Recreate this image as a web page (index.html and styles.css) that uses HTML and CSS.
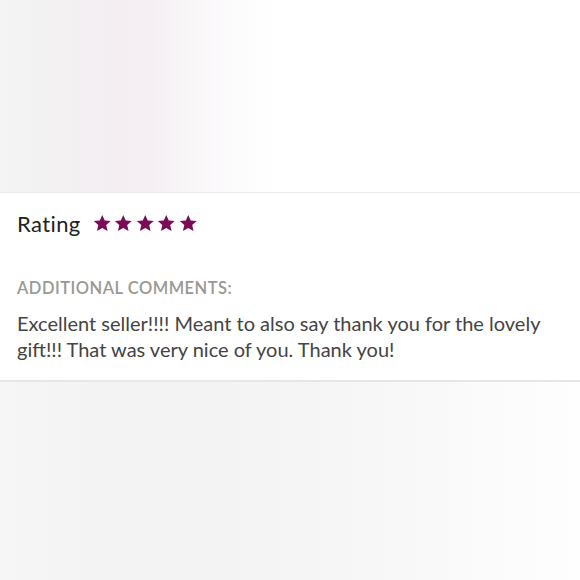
FILE: index.html
```html
<!DOCTYPE html>
<html>
<head>
<meta charset="utf-8">
<link rel="stylesheet" href="styles.css">
</head>
<body>
<div class="page">
  <div class="top-photo"></div>
  <section class="card">
    <div class="rating-row">
      <span class="rating-label">Rating</span>
      <span class="stars">
        <svg class="star" viewBox="0 0 24 24"><path d="M12 1.2l3.2 7.2 7.8.7-5.9 5.2 1.8 7.7L12 18.1l-6.9 3.9 1.8-7.7L1 9.1l7.8-.7z"/></svg>
        <svg class="star" viewBox="0 0 24 24"><path d="M12 1.2l3.2 7.2 7.8.7-5.9 5.2 1.8 7.7L12 18.1l-6.9 3.9 1.8-7.7L1 9.1l7.8-.7z"/></svg>
        <svg class="star" viewBox="0 0 24 24"><path d="M12 1.2l3.2 7.2 7.8.7-5.9 5.2 1.8 7.7L12 18.1l-6.9 3.9 1.8-7.7L1 9.1l7.8-.7z"/></svg>
        <svg class="star" viewBox="0 0 24 24"><path d="M12 1.2l3.2 7.2 7.8.7-5.9 5.2 1.8 7.7L12 18.1l-6.9 3.9 1.8-7.7L1 9.1l7.8-.7z"/></svg>
        <svg class="star" viewBox="0 0 24 24"><path d="M12 1.2l3.2 7.2 7.8.7-5.9 5.2 1.8 7.7L12 18.1l-6.9 3.9 1.8-7.7L1 9.1l7.8-.7z"/></svg>
      </span>
    </div>
    <div class="comments-label">ADDITIONAL COMMENTS:</div>
    <p class="comment">Excellent seller!!!! Meant to also say thank you for the lovely gift!!! That was very nice of you. Thank you!</p>
  </section>
  <div class="bottom-photo"></div>
</div>
</body>
</html>
```
FILE: styles.css
```css
* { box-sizing: border-box; }
html, body { margin: 0; padding: 0; background: #fff; }
.page {
  width: 580px;
  height: 580px;
  display: flex;
  flex-direction: column;
  font-family: "Lato", "Open Sans", sans-serif;
  overflow: hidden;
}
.top-photo {
  height: 193px;
  flex: none;
  background: linear-gradient(90deg, #f4f4f4 0px, #f3f1f2 60px, #f4eef2 110px, #f5eff3 150px, #f9f6f8 190px, #fdfcfd 240px, #ffffff 280px, #ffffff 580px);
  border-bottom: 1px solid #ebebeb;
}
.card {
  flex: none;
  height: 189px;
  padding: 14px 17px 0;
  background: #fff;
  border-bottom: 2px solid #e6e6e6;
}
.rating-row {
  display: flex;
  align-items: center;
  gap: 12px;
  height: 33px;
}
.rating-label {
  font-size: 22px;
  letter-spacing: 0.4px;
  color: #222;
}
.stars {
  display: flex;
  gap: 3px;
}
.star {
  width: 18.5px;
  height: 18.5px;
  fill: #7a0b55;
}
.comments-label {
  margin-top: 38px;
  font-size: 16.5px;
  letter-spacing: 0.5px;
  color: #9b9893;
  font-weight: 600;
}
.comment {
  margin: 12px 0 0;
  font-size: 20px;
  letter-spacing: 0;
  line-height: 26px;
  color: #444;
}
.bottom-photo {
  flex: 1;
  background: linear-gradient(90deg, #f6f6f6 0px, #f3f3f3 100px, #f3f3f3 220px, #f6f6f6 340px, #f9f9f9 430px, #fcfcfc 520px, #fefefe 580px);
}
```
